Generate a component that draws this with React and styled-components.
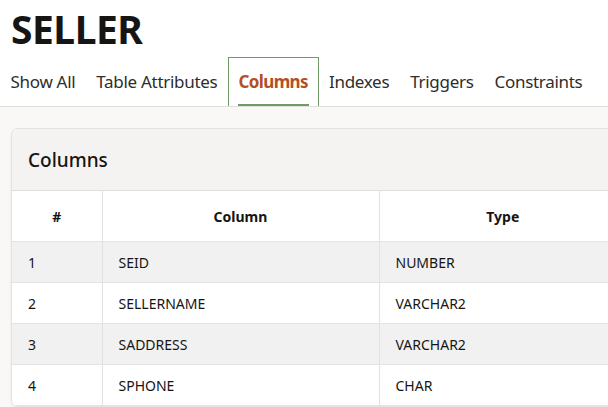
import styled, { createGlobalStyle } from 'styled-components';

const GlobalStyle = createGlobalStyle`
	html, body {
		margin: 0;
		padding: 0;
		background: #ffffff;
		overflow: hidden;
	}
	body {
		font-family: 'Noto Sans', 'Open Sans', sans-serif;
		color: #161513;
	}
`;

const tabs = ['Show All', 'Table Attributes', 'Columns', 'Indexes', 'Triggers', 'Constraints'];

const rows = [
	['1', 'SEID', 'NUMBER'],
	['2', 'SELLERNAME', 'VARCHAR2'],
	['3', 'SADDRESS', 'VARCHAR2'],
	['4', 'SPHONE', 'CHAR'],
];

const App = () => {
	return (
		<StyledPage>
			<GlobalStyle />
			<StyledTitle>SELLER</StyledTitle>
			<StyledTabBar>
				{tabs.map((t) => (
					<StyledTab key={t} $active={t === 'Columns'}>
						{t}
					</StyledTab>
				))}
			</StyledTabBar>
			<StyledContent>
				<StyledCard>
					<StyledCardHeader>Columns</StyledCardHeader>
					<StyledTable>
						<colgroup>
							<col style={{ width: 90 }} />
							<col style={{ width: 277 }} />
							<col style={{ width: 247 }} />
						</colgroup>
						<thead>
							<tr>
								<StyledTh>#</StyledTh>
								<StyledTh>Column</StyledTh>
								<StyledTh>Type</StyledTh>
							</tr>
						</thead>
						<tbody>
							{rows.map((r, i) => (
								<StyledRow key={r[0]} $striped={i % 2 === 0}>
									{r.map((c, j) => (
										<StyledTd key={j}>{c}</StyledTd>
									))}
								</StyledRow>
							))}
						</tbody>
					</StyledTable>
				</StyledCard>
			</StyledContent>
		</StyledPage>
	);
};

export default App;

const StyledPage = styled.div`
	width: 608px;
	height: 407px;
	overflow: hidden;
	display: flex;
	flex-direction: column;
`;
const StyledTitle = styled.h1`
	margin: 0;
	padding: 4px 0 0 11px;
	height: 54px;
	box-sizing: border-box;
	font-size: 39px;
	font-weight: 700;
	line-height: 50px;
	letter-spacing: -0.5px;
	color: #161513;
`;
const StyledTabBar = styled.div`
	display: flex;
	align-items: stretch;
	height: 53px;
	flex-shrink: 0;
	box-sizing: border-box;
	border-bottom: 1px solid #e2e0dd;
	white-space: nowrap;
`;
const StyledTab = styled.div`
	position: relative;
	display: flex;
	align-items: center;
	padding: 0 9.5px 2px;
	margin-top: 3px;
	border: 1px solid ${({ $active }) => ($active ? '#6f9a63' : 'transparent')};
	border-bottom: none;
	font-size: 17px;
	letter-spacing: ${({ $active }) => ($active ? '-0.6px' : '-0.3px')};
	color: ${({ $active }) => ($active ? '#b4501f' : '#2e2d2b')};
	font-weight: ${({ $active }) => ($active ? 700 : 400)};

	&::after {
		content: '';
		display: ${({ $active }) => ($active ? 'block' : 'none')};
		position: absolute;
		left: 9px;
		right: 9px;
		bottom: 0;
		height: 2px;
		background: #6f9a63;
	}
`;
const StyledContent = styled.div`
	flex: 1;
	background: #f9f8f6;
	padding: 21px 0 0 11px;
`;
const StyledCard = styled.div`
	width: 616px;
	background: #ffffff;
	border: 1px solid #e4e2df;
	border-radius: 7px;
	box-shadow: 0 1px 3px rgba(0, 0, 0, 0.06);
	overflow: hidden;
`;
const StyledCardHeader = styled.div`
	height: 62px;
	box-sizing: border-box;
	display: flex;
	align-items: center;
	padding: 0 16px;
	background: #f4f3f1;
	border-bottom: 1px solid #e0dedb;
	font-size: 19px;
	font-weight: 500;
	color: #161513;
`;
const StyledTable = styled.table`
	width: 614px;
	table-layout: fixed;
	border-collapse: collapse;
	font-size: 14px;
`;
const StyledTh = styled.th`
	height: 50px;
	padding: 0 16px;
	text-align: center;
	font-weight: 700;
	font-size: 14px;
	border-left: 1px solid #e4e2df;
	border-bottom: 1px solid #e4e4e4;

	&:first-child {
		border-left: none;
	}
`;
const StyledRow = styled.tr`
	background: ${({ $striped }) => ($striped ? '#f1f1f1' : '#ffffff')};
	border-bottom: 1px solid #e4e4e4;
`;
const StyledTd = styled.td`
	height: 40px;
	padding: 0 16px;
	border-left: 1px solid #e4e2df;
	color: #161513;

	&:first-child {
		border-left: none;
	}
`;
